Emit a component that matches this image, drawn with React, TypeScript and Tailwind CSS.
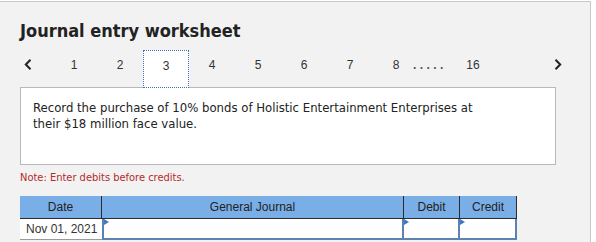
import React from "react";

const Tri = () => (
  <svg width="6" height="7" viewBox="0 0 6 7" className="absolute left-0 top-0">
    <polygon points="0,0 5,3 0,6" fill="#3a78c8" />
  </svg>
);

export default function App() {
  const tabs = ["1", "2", "3", "4", "5", "6", "7", "8"];
  return (
    <div className="w-[596px] h-[242px] bg-white pt-[1px] overflow-hidden">
      <div className="w-[591px] h-[241px] bg-[#f2f2f2] border-t border-r border-[#c8c8c8] pl-[20px] pt-[19px]">
        <div
          className="text-[18px] leading-[20px] font-bold text-[#222]"
          style={{ fontFamily: '"DejaVu Sans Condensed", "DejaVu Sans", sans-serif' }}
        >
          Journal entry worksheet
        </div>
        <div
          className="relative z-10 flex h-[38px] mt-[9px] -mb-[1px] text-[12px] leading-[14px] text-[#333]"
          style={{ fontFamily: '"Liberation Sans", Arial, sans-serif' }}
        >
          <div className="w-[31px] pt-[9px] pl-[4px]">
            <svg width="8" height="11" viewBox="0 0 8 11">
              <polyline points="6.5,0.8 1.8,5.5 6.5,10.2" fill="none" stroke="#222" strokeWidth="2" />
            </svg>
          </div>
          {tabs.map((t) => (
            <div
              key={t}
              className={
                "w-[46px] pt-[8px] text-center " +
                (t === "3" ? "bg-white border border-dotted border-[#3b6fb6]" : "")
              }
            >
              {t}
            </div>
          ))}
          <div className="w-[37px] -ml-[6px] pt-[8px] tracking-[3.4px] font-bold text-[#555]">.....</div>
          <div className="w-[46px] pt-[8px] text-center">16</div>
          <div className="flex-1 pt-[9px] flex justify-end pr-[28px]">
            <svg width="8" height="11" viewBox="0 0 8 11">
              <polyline points="1.5,0.8 6.2,5.5 1.5,10.2" fill="none" stroke="#222" strokeWidth="2" />
            </svg>
          </div>
        </div>
        <div
          className="w-[536px] h-[78px] bg-white border border-[#b8b8b8] pl-[12px] pt-[12px] text-[13px] leading-[16px] text-[#222]"
          style={{ fontFamily: '"DejaVu Sans Condensed", "DejaVu Sans", sans-serif' }}
        >
          Record the purchase of 10% bonds of Holistic Entertainment Enterprises at
          <br />
          their $18 million face value.
        </div>
        <div
          className="mt-[6px] text-[11px] leading-[14px] text-[#b22a2a]"
          style={{ fontFamily: '"DejaVu Sans Condensed", "DejaVu Sans", sans-serif' }}
        >
          Note: Enter debits before credits.
        </div>
        <div
          className="mt-[11px] w-[497px] text-[12px] text-[#222]"
          style={{ fontFamily: '"Liberation Sans", Arial, sans-serif' }}
        >
          <div className="grid grid-cols-[82px_302px_56px_57px] h-[23px] bg-[#7aaee6] border-b border-[#2b2b2b]">
            <div className="flex items-center justify-center border-r border-[#2b2b2b]">Date</div>
            <div className="flex items-center justify-center border-r border-[#2b2b2b]">General Journal</div>
            <div className="flex items-center justify-center border-r border-[#2b2b2b]">Debit</div>
            <div className="flex items-center justify-center border-r border-[#2b2b2b]">Credit</div>
          </div>
          <div className="grid grid-cols-[82px_302px_56px_57px] h-[21px]">
            <div className="flex items-center pl-[6px] bg-white border-b border-[#9a9a9a] text-[#333]">Nov 01, 2021</div>
            <div className="relative bg-white border-x-2 border-b-2 border-[#5b82b0]">
              <Tri />
            </div>
            <div className="relative bg-white border-r-2 border-b-2 border-[#5b82b0]">
              <Tri />
            </div>
            <div className="relative bg-white border-r-2 border-b-2 border-[#5b82b0]">
              <Tri />
            </div>
          </div>
        </div>
      </div>
    </div>
  );
}
